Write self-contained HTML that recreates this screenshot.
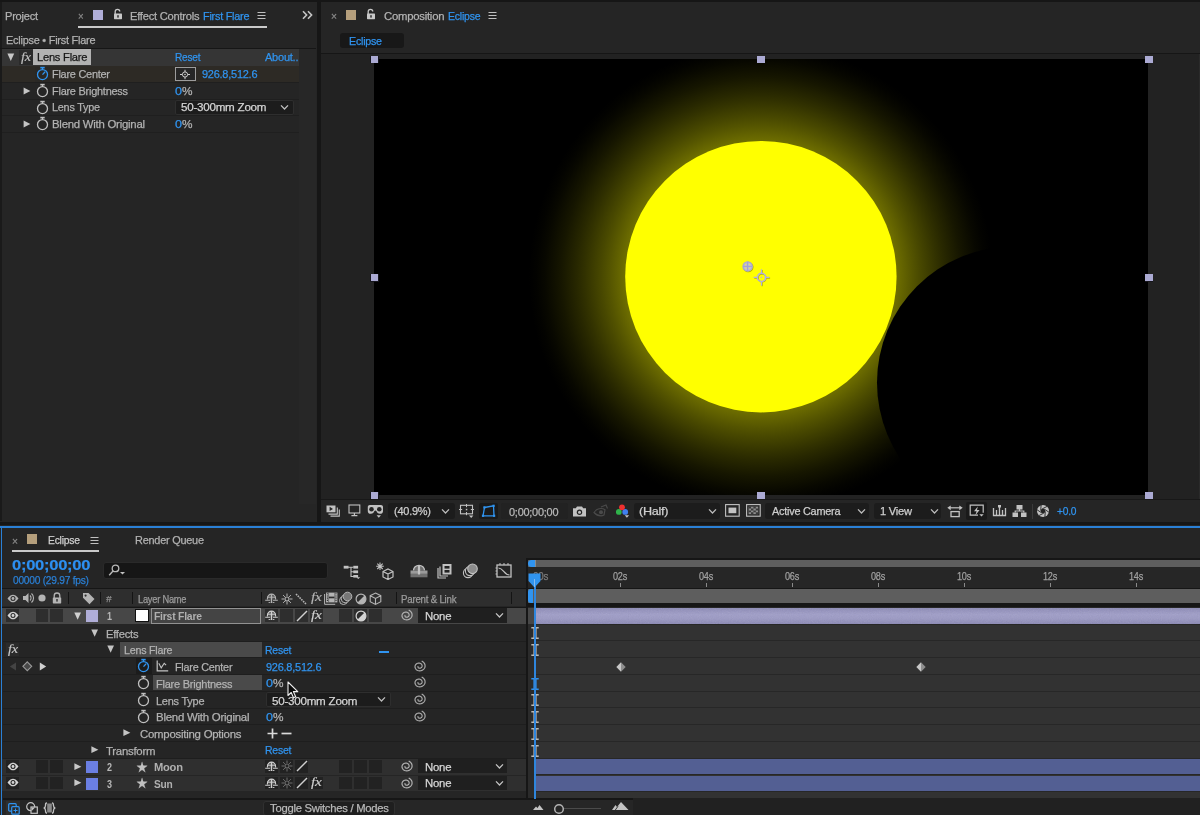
<!DOCTYPE html>
<html lang="en"><head><meta charset="utf-8"><title>Eclipse - After Effects</title>
<style>
html,body{margin:0;padding:0;background:#161616;}
body{width:1200px;height:815px;position:relative;overflow:hidden;font-family:"Liberation Sans",sans-serif;font-size:12px;color:#b9b9b9;}
#app{position:absolute;left:0;top:0;width:1200px;height:815px;overflow:hidden;}
#app div,#app span,#app svg{position:absolute;display:block;box-sizing:border-box;}
#app span{white-space:pre;transform-origin:0 50%;-webkit-text-stroke:0.25px;}
</style></head><body><div id="app">
<div style="left:0px;top:2px;width:317px;height:519.7px;background:#252525;"></div>
<div style="left:0px;top:2px;width:1.5px;height:519px;background:#1a1a1a;"></div>
<div style="left:321px;top:2px;width:879px;height:519.7px;background:#252525;"></div>
<div style="left:0px;top:525px;width:1200px;height:290px;background:#252525;"></div>
<div style="left:0px;top:525.8px;width:1200px;height:2px;background:#2a80d6;"></div>
<div style="left:0.8px;top:525.8px;width:1.3px;height:290px;background:#2a80d6;"></div>
<span style="left:5px;top:5.5px;height:20px;line-height:20px;font-size:11.6px;color:#b2b2b2;letter-spacing:-0.25px;transform:scaleX(0.9539);">Project</span>
<span style="left:78.3px;top:6px;height:20px;line-height:20px;font-size:11px;color:#8a8a8a;letter-spacing:-0.25px;transform:scaleX(0.8854);">×</span>
<div style="left:92.5px;top:10px;width:10.5px;height:9.5px;background:#b0aed8;"></div>
<svg style="left:113px;top:8px;" width="10" height="12" viewBox="0 0 10 12"><path d="M2.2 6V3.6a2.3 2.3 0 0 1 4.6 0" fill="none" stroke="#c8c8c8" stroke-width="1.3"/><rect x="1" y="5.6" width="8" height="5.6" rx="0.6" fill="#c8c8c8"/><rect x="4.3" y="7.2" width="1.4" height="2.4" fill="#232323"/></svg>
<span style="left:130px;top:5.5px;height:20px;line-height:20px;font-size:11.6px;color:#b2b2b2;letter-spacing:-0.25px;transform:scaleX(0.9609);">Effect Controls</span>
<span style="left:202.5px;top:5.5px;height:20px;line-height:20px;font-size:11.6px;color:#3094f0;letter-spacing:-0.25px;transform:scaleX(0.9361);">First Flare</span>
<svg style="left:257px;top:11px;" width="9" height="9" viewBox="0 0 9 9"><path d="M0.5 1.5h8M0.5 4.5h8M0.5 7.5h8" stroke="#c0c0c0" stroke-width="1.1"/></svg>
<div style="left:78px;top:25.8px;width:188.5px;height:1.8px;background:#cacaca;"></div>
<svg style="left:302px;top:10px;" width="11" height="10" viewBox="0 0 11 10"><path d="M1 1.2l3.6 3.8L1 8.8M6 1.2l3.6 3.8L6 8.8" fill="none" stroke="#c6c6c6" stroke-width="1.6"/></svg>
<span style="left:6px;top:29.5px;height:20px;line-height:20px;font-size:11.6px;color:#b2b2b2;letter-spacing:-0.25px;transform:scaleX(0.9415);">Eclipse • First Flare</span>
<div style="left:0px;top:47.7px;width:316px;height:1.3px;background:#161616;"></div>
<div style="left:299px;top:49px;width:17.4px;height:455px;background:#272727;"></div>
<div style="left:2px;top:49px;width:297px;height:16.7px;background:#353535;"></div>
<div style="left:2px;top:66px;width:297px;height:16.3px;background:#2d2a25;"></div>
<div style="left:2px;top:98.5px;width:297px;height:1px;background:#1f1f1f;"></div>
<div style="left:2px;top:115.2px;width:297px;height:1px;background:#1f1f1f;"></div>
<div style="left:2px;top:131.8px;width:297px;height:1px;background:#1f1f1f;"></div>
<div style="left:2px;top:82.3px;width:297px;height:1px;background:#1f1f1f;"></div>
<svg style="left:6.5px;top:53px;" width="8" height="9" viewBox="0 0 8 9"><path d="M0.400 0.500h6.800L3.800 8.100z" fill="#c8c8c8"/></svg>
<div style="left:19px;top:49.5px;width:13.5px;height:15.5px;background:#2a2a2a;"></div>
<span style="left:20.5px;top:46.8px;height:20px;line-height:20px;font-size:13.5px;color:#c0c0c0;letter-spacing:-0.25px;transform:scaleX(1.0526);font-style:italic;font-family:'Liberation Serif',serif;-webkit-text-stroke:0.150px;">fx</span>
<div style="left:33px;top:49.3px;width:58px;height:16px;background:#b2b2b2;"></div>
<span style="left:37px;top:47.3px;height:20px;line-height:20px;font-size:11.6px;color:#161616;letter-spacing:-0.25px;transform:scaleX(0.9613);">Lens Flare</span>
<span style="left:175px;top:47.3px;height:20px;line-height:20px;font-size:11.6px;color:#3094f0;letter-spacing:-0.25px;transform:scaleX(0.8704);">Reset</span>
<span style="left:265px;top:47.3px;height:20px;line-height:20px;font-size:11.6px;color:#3094f0;letter-spacing:-0.25px;transform:scaleX(0.9504);">About..</span>
<div style="left:34.5px;top:66.5px;width:15px;height:15.5px;background:#2a2825;"></div>
<svg style="left:35.5px;top:66.3px;" width="13" height="15" viewBox="0 0 13 15"><circle cx="6.5" cy="8.6" r="5" fill="none" stroke="#3094f0" stroke-width="1.3"/><path d="M4.3 1.6h4.4" stroke="#3094f0" stroke-width="1.6"/><path d="M6.5 2v2" stroke="#3094f0" stroke-width="1.3"/></svg>
<svg style="left:35.5px;top:66.3px;" width="13" height="15" viewBox="0 0 13 15"><path d="M6.5 8.6l2.6-2.8" stroke="#3094f0" stroke-width="1.3"/></svg>
<span style="left:51.5px;top:64px;height:20px;line-height:20px;font-size:11.6px;color:#b2b2b2;letter-spacing:-0.25px;transform:scaleX(0.9402);">Flare Center</span>
<div style="left:174.5px;top:67px;width:21.7px;height:14.2px;background:#262626;border:1.200px solid #9c9c9c;"></div>
<svg style="left:179px;top:68.5px;" width="12" height="11" viewBox="0 0 12 11"><circle cx="6" cy="5.5" r="2.6" fill="none" stroke="#cfcfcf" stroke-width="1"/><path d="M6 0.8v2.2M6 8v2.2M1 5.5h2.3M8.7 5.5h2.3" stroke="#cfcfcf" stroke-width="1"/><circle cx="6" cy="5.5" r="0.8" fill="#cfcfcf"/></svg>
<span style="left:202px;top:64px;height:20px;line-height:20px;font-size:11.6px;color:#3094f0;letter-spacing:-0.25px;transform:scaleX(0.9447);">926.8,512.6</span>
<svg style="left:23px;top:86.5px;" width="8" height="8" viewBox="0 0 8 8"><path d="M0.6 0.4L7.4 4 0.6 7.6z" fill="#c4c4c4"/></svg>
<svg style="left:35.5px;top:83px;" width="13" height="15" viewBox="0 0 13 15"><circle cx="6.5" cy="8.6" r="5" fill="none" stroke="#c0c0c0" stroke-width="1.3"/><path d="M4.3 1.6h4.4" stroke="#c0c0c0" stroke-width="1.6"/><path d="M6.5 2v2" stroke="#c0c0c0" stroke-width="1.3"/></svg>
<span style="left:51.5px;top:80.7px;height:20px;line-height:20px;font-size:11.6px;color:#b2b2b2;letter-spacing:-0.25px;transform:scaleX(0.9421);">Flare Brightness</span>
<span style="left:175px;top:80.7px;height:20px;line-height:20px;font-size:11.6px;color:#3094f0;letter-spacing:-0.25px;transform:scaleX(1.0847);">0</span>
<span style="left:181.5px;top:80.7px;height:20px;line-height:20px;font-size:11.6px;color:#b2b2b2;letter-spacing:-0.25px;transform:scaleX(1.0182);">%</span>
<svg style="left:35.5px;top:99.7px;" width="13" height="15" viewBox="0 0 13 15"><circle cx="6.5" cy="8.6" r="5" fill="none" stroke="#c0c0c0" stroke-width="1.3"/><path d="M4.3 1.6h4.4" stroke="#c0c0c0" stroke-width="1.6"/><path d="M6.5 2v2" stroke="#c0c0c0" stroke-width="1.3"/></svg>
<span style="left:51.5px;top:97.3px;height:20px;line-height:20px;font-size:11.6px;color:#b2b2b2;letter-spacing:-0.25px;transform:scaleX(0.9357);">Lens Type</span>
<div style="left:175px;top:100px;width:118.5px;height:14.5px;background:#1c1c1c;border:1px solid #2e2e2e;border-radius:2px;"></div>
<span style="left:181px;top:97.3px;height:20px;line-height:20px;font-size:11.6px;color:#d4d4d4;letter-spacing:-0.25px;transform:scaleX(1.0026);">50-300mm Zoom</span>
<svg style="left:280px;top:104px;" width="9" height="7" viewBox="0 0 9 7"><path d="M1 1.4l3.5 3.6L8 1.4" fill="none" stroke="#c0c0c0" stroke-width="1.3"/></svg>
<svg style="left:23px;top:120px;" width="8" height="8" viewBox="0 0 8 8"><path d="M0.6 0.4L7.4 4 0.6 7.6z" fill="#c4c4c4"/></svg>
<svg style="left:35.5px;top:116.4px;" width="13" height="15" viewBox="0 0 13 15"><circle cx="6.5" cy="8.6" r="5" fill="none" stroke="#c0c0c0" stroke-width="1.3"/><path d="M4.3 1.6h4.4" stroke="#c0c0c0" stroke-width="1.6"/><path d="M6.5 2v2" stroke="#c0c0c0" stroke-width="1.3"/></svg>
<span style="left:51.5px;top:114px;height:20px;line-height:20px;font-size:11.6px;color:#b2b2b2;letter-spacing:-0.25px;transform:scaleX(0.9817);">Blend With Original</span>
<span style="left:175px;top:114px;height:20px;line-height:20px;font-size:11.6px;color:#3094f0;letter-spacing:-0.25px;transform:scaleX(1.0847);">0</span>
<span style="left:181.5px;top:114px;height:20px;line-height:20px;font-size:11.6px;color:#b2b2b2;letter-spacing:-0.25px;transform:scaleX(1.0182);">%</span>
<span style="left:330.5px;top:6px;height:20px;line-height:20px;font-size:11px;color:#8a8a8a;letter-spacing:-0.25px;transform:scaleX(0.9320);">×</span>
<div style="left:346px;top:10px;width:10px;height:9.5px;background:#b59f7c;"></div>
<svg style="left:365.5px;top:8px;" width="10" height="12" viewBox="0 0 10 12"><path d="M2.2 6V3.6a2.3 2.3 0 0 1 4.6 0" fill="none" stroke="#c8c8c8" stroke-width="1.3"/><rect x="1" y="5.6" width="8" height="5.6" rx="0.6" fill="#c8c8c8"/><rect x="4.3" y="7.2" width="1.4" height="2.4" fill="#232323"/></svg>
<span style="left:383.5px;top:5.5px;height:20px;line-height:20px;font-size:11.6px;color:#b2b2b2;letter-spacing:-0.25px;transform:scaleX(0.9765);">Composition</span>
<span style="left:448px;top:5.5px;height:20px;line-height:20px;font-size:11.6px;color:#3094f0;letter-spacing:-0.25px;transform:scaleX(0.9059);">Eclipse</span>
<svg style="left:488px;top:11px;" width="9" height="9" viewBox="0 0 9 9"><path d="M0.5 1.5h8M0.5 4.5h8M0.5 7.5h8" stroke="#c0c0c0" stroke-width="1.1"/></svg>
<div style="left:340px;top:33px;width:63.5px;height:15px;background:#181818;border-radius:3px;"></div>
<span style="left:349px;top:30.5px;height:20px;line-height:20px;font-size:11.6px;color:#3094f0;letter-spacing:-0.25px;transform:scaleX(0.9199);">Eclipse</span>
<div style="left:321px;top:52.5px;width:879px;height:1.5px;background:#161616;"></div>
<div style="left:321px;top:54px;width:879px;height:445.5px;background:#222222;"></div>
<div style="left:1198.7px;top:54px;width:1.3px;height:445.5px;background:#2a2a2a;"></div>
<div style="left:321px;top:498.9px;width:879px;height:1.4px;background:#181818;"></div>
<svg style="left:374.200px;top:59.100px" width="773.700" height="435.500" viewBox="0 0 773.700 435.500">
<defs><radialGradient id="glow" cx="386.900" cy="217.700" r="232" gradientUnits="userSpaceOnUse"><stop offset="0" stop-color="#ffff00"/><stop offset="0.5849" stop-color="#6e6e00"/><stop offset="0.6195" stop-color="#616100"/><stop offset="0.6541" stop-color="#545400"/><stop offset="0.6887" stop-color="#484800"/><stop offset="0.7233" stop-color="#3d3d00"/><stop offset="0.7579" stop-color="#323200"/><stop offset="0.7925" stop-color="#282800"/><stop offset="0.8270" stop-color="#1f1f00"/><stop offset="0.8616" stop-color="#161600"/><stop offset="0.8962" stop-color="#0f0f00"/><stop offset="0.9308" stop-color="#080800"/><stop offset="0.9654" stop-color="#030300"/><stop offset="1.0000" stop-color="#000000"/></radialGradient></defs>
<rect width="774" height="436" fill="#000"/>
<circle cx="386.900" cy="217.700" r="232" fill="url(#glow)"/>
<circle cx="386.900" cy="217.700" r="135.700" fill="#ffff00"/>
<circle cx="638.900" cy="323.500" r="135.900" fill="#000"/>
</svg>
<svg style="left:741px;top:260px;" width="14" height="14" viewBox="0 0 14 14"><g transform="translate(0.700,0.700)" opacity="0.550"><circle cx="6.600" cy="6.400" r="4.700" fill="none" stroke="#707000" stroke-width="1.100"/></g><circle cx="6.600" cy="6.400" r="4.700" fill="#bab8e2" fill-opacity="0.900" stroke="#aaa8d6" stroke-width="1.100"/><path d="M2 6.400h9.200M6.600 1.800v9.200" stroke="#a3a1d2" stroke-width="1"/><path d="M4.700 4.500h0.010M8.500 4.500h0.010M4.700 8.300h0.010M8.500 8.300h0.010" stroke="#e6e66a" stroke-width="1.300" stroke-linecap="round"/></svg>
<svg style="left:752px;top:268px;" width="20" height="20" viewBox="0 0 20 20"><g transform="translate(0.700,0.700)" opacity="0.500"><circle cx="9.500" cy="9.400" r="3.900" fill="none" stroke="#707000" stroke-width="1.200"/><path d="M9.500 1.300v4M9.500 13.500v4M1.600 9.400h4M13.400 9.400h4" stroke="#707000" stroke-width="1.200"/></g><circle cx="9.500" cy="9.400" r="4.100" fill="none" stroke="#b3b0dc" stroke-width="1.600"/><path d="M9.500 1.300v4.200M9.500 13.300v4.200M1.600 9.400h4.200M13.200 9.400h4.200" stroke="#b3b0dc" stroke-width="1.200"/><circle cx="9.500" cy="9.400" r="0.700" fill="#b3b0dc"/></svg>
<div style="left:370.3px;top:55.7px;width:8.4px;height:7.6px;background:#15151c;"></div>
<div style="left:370.6px;top:56.0px;width:7.8px;height:7px;background:#abaad3;"></div>
<div style="left:756.8px;top:55.7px;width:8.4px;height:7.6px;background:#15151c;"></div>
<div style="left:757.1px;top:56.0px;width:7.8px;height:7px;background:#abaad3;"></div>
<div style="left:1144.8px;top:55.7px;width:8.4px;height:7.6px;background:#15151c;"></div>
<div style="left:1145.1px;top:56.0px;width:7.8px;height:7px;background:#abaad3;"></div>
<div style="left:370.3px;top:274.0px;width:8.4px;height:7.6px;background:#15151c;"></div>
<div style="left:370.6px;top:274.3px;width:7.8px;height:7px;background:#abaad3;"></div>
<div style="left:1144.8px;top:274.0px;width:8.4px;height:7.6px;background:#15151c;"></div>
<div style="left:1145.1px;top:274.3px;width:7.8px;height:7px;background:#abaad3;"></div>
<div style="left:370.3px;top:491.5px;width:8.4px;height:7.6px;background:#15151c;"></div>
<div style="left:370.6px;top:491.8px;width:7.8px;height:7px;background:#abaad3;"></div>
<div style="left:756.8px;top:491.5px;width:8.4px;height:7.6px;background:#15151c;"></div>
<div style="left:757.1px;top:491.8px;width:7.8px;height:7px;background:#abaad3;"></div>
<div style="left:1144.8px;top:491.5px;width:8.4px;height:7.6px;background:#15151c;"></div>
<div style="left:1145.1px;top:491.8px;width:7.8px;height:7px;background:#abaad3;"></div>
<svg style="left:325.5px;top:504.5px;" width="15" height="12" viewBox="0 0 15 12"><rect x="0.500" y="0.500" width="9" height="6.800" fill="#c2c2c2"/><path d="M3.600 1.800v4.200l3.400-2.100z" fill="#252525"/><path d="M11.300 2.600v6.500H2.500M13.300 4.600v6.500H4.500" fill="none" stroke="#c2c2c2" stroke-width="1.100"/></svg>
<svg style="left:347.8px;top:504px;" width="13" height="13" viewBox="0 0 13 13"><rect x="1" y="1" width="10.800" height="8" fill="none" stroke="#c2c2c2" stroke-width="1.100"/><path d="M6.400 9v2.200M3.400 11.600h6" stroke="#c2c2c2" stroke-width="1.200"/></svg>
<svg style="left:367.3px;top:504.3px;" width="17" height="15" viewBox="0 0 17 15"><path d="M0.800 2.800c0-1.100.9-1.900 2-1.900h11.200c1.100 0 2 .8 2 1.900v4.400c0 1.600-1.200 2.600-3 2.600-2.200 0-2.800-1.300-3.500-2.500-.3-.5-.6-.7-1.100-.7s-.8.200-1.100.7C6.600 8.500 6 9.800 3.800 9.800 2 9.800.8 8.800.8 7.200z" fill="#c2c2c2"/><ellipse cx="4.500" cy="5.200" rx="2.300" ry="2.300" fill="#252525"/><ellipse cx="12.300" cy="5.200" rx="2.300" ry="2.300" fill="#252525"/><path d="M9.600 11.300h4.400l-2.200 2.500z" fill="#c2c2c2"/></svg>
<div style="left:387.5px;top:502.5px;width:67px;height:16.5px;background:#1c1c1c;border-radius:3px;"></div>
<span style="left:394px;top:501.3px;height:20px;line-height:20px;font-size:11.6px;color:#cfcfcf;letter-spacing:-0.25px;transform:scaleX(0.9461);">(40.9%)</span>
<svg style="left:441px;top:508px;" width="9" height="7" viewBox="0 0 9 7"><path d="M1 1.4l3.5 3.6L8 1.4" fill="none" stroke="#bdbdbd" stroke-width="1.3"/></svg>
<svg style="left:458.5px;top:504px;" width="16" height="15" viewBox="0 0 16 15"><rect x="1.500" y="1.300" width="12" height="8.500" fill="none" stroke="#c2c2c2" stroke-width="1.100"/><path d="M7.500 0v3.200M7.500 8v3.200M0 5.500h3.200M11.800 5.500h3.200" stroke="#c2c2c2" stroke-width="1"/><rect x="6.800" y="4.800" width="1.500" height="1.500" fill="#c2c2c2"/><path d="M10 11.500h4.400l-2.200 2.500z" fill="#c2c2c2"/></svg>
<div style="left:478.5px;top:502.5px;width:19.5px;height:16.5px;background:#1a1a1a;border-radius:2px;"></div>
<svg style="left:481px;top:504px;" width="15" height="14" viewBox="0 0 15 14"><path d="M3.500 3.500L12.500 1.800 13 11.800 2 11.800z" fill="none" stroke="#3094f0" stroke-width="1.300"/><rect x="2.300" y="2.300" width="2.200" height="2.200" fill="#3094f0"/><rect x="11.500" y="0.700" width="2.200" height="2.200" fill="#3094f0"/><rect x="12" y="10.700" width="2.200" height="2.200" fill="#3094f0"/><rect x="0.900" y="10.700" width="2.200" height="2.200" fill="#3094f0"/></svg>
<div style="left:500.5px;top:502.5px;width:67.5px;height:16.5px;background:#222222;border-radius:2px;"></div>
<span style="left:508.5px;top:501.5px;height:20px;line-height:20px;font-size:11.5px;color:#b8b8b8;letter-spacing:-0.25px;transform:scaleX(0.9499);">0;00;00;00</span>
<svg style="left:571.5px;top:504.5px;" width="15" height="13" viewBox="0 0 15 13"><path d="M1 3.200h2.800l1.200-1.700h5l1.200 1.700H14v8.300H1z" fill="#c2c2c2"/><circle cx="7.500" cy="7.200" r="2.700" fill="#232323"/><circle cx="7.500" cy="7.200" r="1.500" fill="#c2c2c2"/></svg>
<svg style="left:593px;top:503.5px;" width="16" height="15" viewBox="0 0 16 15"><path d="M1 8.500c2-3 4.500-4 7-4 1.500 0 3 .5 4 1.200l-1 5.300c-1 .5-2 .8-3 .8-2.500 0-5-1-7-3.300z" fill="none" stroke="#4a4a4a" stroke-width="1.200"/><circle cx="8" cy="8.300" r="2" fill="#4a4a4a"/><path d="M8 3l5-2 1.500 3.500" fill="none" stroke="#4a4a4a" stroke-width="1.200"/></svg>
<svg style="left:615.5px;top:503.5px;" width="14" height="15" viewBox="0 0 14 15"><circle cx="2.800" cy="7.900" r="2.900" fill="#2fb34a"/><circle cx="9.200" cy="7.900" r="2.900" fill="#3f7fee"/><circle cx="6" cy="3.300" r="2.900" fill="#ee3030"/><path d="M8.700 11.300h4.400l-2.200 2.500z" fill="#c2c2c2"/></svg>
<div style="left:633.5px;top:502.5px;width:86.5px;height:16.5px;background:#1c1c1c;border-radius:3px;"></div>
<span style="left:639px;top:501.3px;height:20px;line-height:20px;font-size:11.6px;color:#cfcfcf;letter-spacing:-0.25px;transform:scaleX(1.0888);">(Half)</span>
<svg style="left:707.5px;top:508px;" width="9" height="7" viewBox="0 0 9 7"><path d="M1 1.4l3.5 3.6L8 1.4" fill="none" stroke="#bdbdbd" stroke-width="1.3"/></svg>
<svg style="left:724.5px;top:504px;" width="15" height="13" viewBox="0 0 15 13"><rect x="0.600" y="0.600" width="13.600" height="11.600" fill="none" stroke="#c2c2c2" stroke-width="1.100"/><rect x="3.500" y="3.600" width="7.800" height="5.600" fill="#c2c2c2"/></svg>
<svg style="left:746px;top:504px;" width="15" height="13" viewBox="0 0 15 13"><rect x="0.600" y="0.600" width="13.600" height="11.600" fill="none" stroke="#c2c2c2" stroke-width="1.100"/><rect x="2.600" y="2.600" width="9.600" height="7.600" fill="#8e8e8e"/><path d="M2.600 2.600h2.400v1.900H2.600zM7.400 2.600h2.400v1.900H7.400zM5 4.500h2.400v1.900H5zM9.800 4.500h2.400v1.900H9.800zM2.600 6.400h2.400v1.900H2.600zM7.400 6.400h2.400v1.900H7.400zM5 8.300h2.400v1.900H5zM9.800 8.300h2.400v1.900H9.800z" fill="#3a3a3a"/></svg>
<div style="left:765px;top:502.5px;width:104px;height:16.5px;background:#1c1c1c;border-radius:3px;"></div>
<span style="left:771.5px;top:501.3px;height:20px;line-height:20px;font-size:11.6px;color:#cfcfcf;letter-spacing:-0.25px;transform:scaleX(0.9380);">Active Camera</span>
<svg style="left:857px;top:508px;" width="9" height="7" viewBox="0 0 9 7"><path d="M1 1.4l3.5 3.6L8 1.4" fill="none" stroke="#bdbdbd" stroke-width="1.3"/></svg>
<div style="left:873.5px;top:502.5px;width:67.5px;height:16.5px;background:#1c1c1c;border-radius:3px;"></div>
<span style="left:880px;top:501.3px;height:20px;line-height:20px;font-size:11.6px;color:#cfcfcf;letter-spacing:-0.25px;transform:scaleX(0.9597);">1 View</span>
<svg style="left:930px;top:508px;" width="9" height="7" viewBox="0 0 9 7"><path d="M1 1.4l3.5 3.6L8 1.4" fill="none" stroke="#bdbdbd" stroke-width="1.3"/></svg>
<svg style="left:946.5px;top:503.5px;" width="16" height="14" viewBox="0 0 16 14"><path d="M2.500 3.800h11" stroke="#c2c2c2" stroke-width="1.200"/><path d="M0.300 3.800l3.400-2.400v4.800zM15.700 3.800l-3.400-2.400v4.800z" fill="#c2c2c2"/><rect x="4" y="7.600" width="8.200" height="5" fill="none" stroke="#c2c2c2" stroke-width="1.300"/></svg>
<div style="left:965.5px;top:502px;width:21.5px;height:17.5px;background:#1a1a1a;border-radius:2px;"></div>
<svg style="left:968.5px;top:504px;" width="16" height="14" viewBox="0 0 16 14"><path d="M9 11.200H1.200V1.200h13v7.500" fill="none" stroke="#c2c2c2" stroke-width="1.200"/><path d="M8.800 2.500L5 7.300h2.600L6.200 11.500 10.600 6H8z" fill="#c2c2c2"/><path d="M10.300 10.200h4.400l-2.200 2.400z" fill="#c2c2c2"/></svg>
<svg style="left:991.5px;top:504px;" width="15" height="14" viewBox="0 0 15 14"><path d="M1.500 4v7.500h12V4" fill="none" stroke="#c2c2c2" stroke-width="1.300"/><path d="M4.500 6v5M7.500 2v9.500M10.500 6v5" stroke="#c2c2c2" stroke-width="1.300"/><rect x="6" y="1" width="3" height="2.500" fill="#c2c2c2"/></svg>
<svg style="left:1012px;top:504px;" width="15" height="14" viewBox="0 0 15 14"><rect x="4.500" y="1" width="6" height="4.500" fill="#c2c2c2"/><rect x="0.500" y="8.500" width="5.500" height="4.500" fill="#c2c2c2"/><rect x="9" y="8.500" width="5.500" height="4.500" fill="#c2c2c2"/><path d="M7.500 5v2M3.200 8.500V7h8.600v1.500" fill="none" stroke="#c2c2c2" stroke-width="1.200"/></svg>
<div style="left:1031.5px;top:503.5px;width:1px;height:15px;background:#3a3a3a;"></div>
<svg style="left:1036.3px;top:504.2px;" width="14" height="14" viewBox="0 0 14 14"><circle cx="7" cy="7" r="6" fill="#c2c2c2"/><circle cx="7" cy="7" r="2.300" fill="#252525"/><path d="M9.27 7.40L8.92 12.90M7.79 9.16L2.85 11.61M5.52 8.76L0.94 5.71M4.73 6.60L5.08 1.10M6.21 4.84L11.15 2.39M8.48 5.24L13.06 8.29" stroke="#252525" stroke-width="0.900"/></svg>
<span style="left:1056.5px;top:501.3px;height:20px;line-height:20px;font-size:11.6px;color:#3094f0;letter-spacing:-0.25px;transform:scaleX(0.8807);">+0.0</span>
<span style="left:11.5px;top:530.5px;height:20px;line-height:20px;font-size:11px;color:#8a8a8a;letter-spacing:-0.25px;transform:scaleX(0.9320);">×</span>
<div style="left:26.7px;top:534px;width:10px;height:10px;background:#b59f7c;"></div>
<span style="left:48px;top:530.4px;height:20px;line-height:20px;font-size:11.6px;color:#d0d0d0;letter-spacing:-0.25px;transform:scaleX(0.8920);">Eclipse</span>
<svg style="left:90px;top:536px;" width="9" height="9" viewBox="0 0 9 9"><path d="M0.5 1.5h8M0.5 4.5h8M0.5 7.5h8" stroke="#c0c0c0" stroke-width="1.1"/></svg>
<div style="left:12px;top:550.2px;width:87px;height:1.8px;background:#cacaca;"></div>
<span style="left:135px;top:530.4px;height:20px;line-height:20px;font-size:11.6px;color:#b2b2b2;letter-spacing:-0.25px;transform:scaleX(0.9412);">Render Queue</span>
<span style="left:12px;top:555.2px;height:20px;line-height:20px;font-size:15px;color:#2d8ff0;letter-spacing:-0.25px;transform:scaleX(1.1034);font-weight:700;-webkit-text-stroke:0.200px;">0;00;00;00</span>
<span style="left:13px;top:570.3px;height:20px;line-height:20px;font-size:10.5px;color:#2a7fd4;letter-spacing:-0.25px;transform:scaleX(0.9705);">00000 (29.97 fps)</span>
<div style="left:102.5px;top:561.8px;width:225px;height:17.6px;background:#161616;border-radius:3px;border:1px solid #2a2a2a;"></div>
<svg style="left:108px;top:564px;" width="18" height="13" viewBox="0 0 18 13"><circle cx="7.500" cy="4.400" r="3.300" fill="none" stroke="#b8b8b8" stroke-width="1.300"/><path d="M5.300 6.800L1.200 11.200" stroke="#b8b8b8" stroke-width="1.400"/><path d="M12 8h5l-2.500 2.600z" fill="#c0c0c0"/></svg>
<svg style="left:342px;top:564px;" width="19" height="15" viewBox="0 0 19 15"><path d="M4 3.200h7.500M9 3.200v9.300h3M9 7.800h3" fill="none" stroke="#c2c2c2" stroke-width="1.100"/><rect x="1.700" y="1.800" width="4.800" height="2.800" fill="#c2c2c2"/><rect x="11.300" y="1.800" width="4.800" height="2.800" fill="#c2c2c2"/><rect x="11.300" y="6.400" width="4.800" height="2.800" fill="#c2c2c2"/><rect x="11.300" y="11" width="4.800" height="2.600" fill="#c2c2c2"/><path d="M14.300 13.200h4l-2 1.800z" fill="#c2c2c2"/></svg>
<svg style="left:374.5px;top:561.5px;" width="19" height="18" viewBox="0 0 19 18"><path d="M5 0.500v7.500M1.200 4.300h7.600M2.300 1.600l5.400 5.400M7.700 1.600L2.300 7" stroke="#c2c2c2" stroke-width="1.100"/><path d="M8 9.500l5-2.500 5 2.500v5.500l-5 2.500-5-2.500zM8 9.500l5 2.500 5-2.500M13 12v5.500" fill="none" stroke="#c2c2c2" stroke-width="1.200"/></svg>
<svg style="left:409.5px;top:562.5px;" width="18" height="15" viewBox="0 0 18 15"><path d="M3.500 7.500a5.500 5.200 0 0 1 11 0" fill="#6e6e6e" stroke="#c2c2c2" stroke-width="1.300"/><rect x="7.900" y="3" width="2.200" height="8" fill="#c2c2c2"/><rect x="0.500" y="7.500" width="17" height="3.400" fill="#9a9a9a"/><rect x="0.500" y="10.900" width="17" height="3.400" fill="#707070"/><rect x="7.900" y="6" width="2.200" height="5.500" fill="#c2c2c2"/></svg>
<svg style="left:437px;top:562.5px;" width="15" height="16" viewBox="0 0 15 16"><path d="M1 5v10h8" fill="none" stroke="#c2c2c2" stroke-width="1.200"/><path d="M3 3.500v9.500h8" fill="none" stroke="#c2c2c2" stroke-width="1.200"/><rect x="5.500" y="1" width="9" height="10.500" fill="#c2c2c2"/><rect x="7.500" y="3" width="5" height="2.600" fill="#232323"/><rect x="7.500" y="7" width="5" height="2.600" fill="#232323"/></svg>
<svg style="left:461.5px;top:562.5px;" width="17" height="16" viewBox="0 0 17 16"><circle cx="6" cy="10" r="4.600" fill="none" stroke="#c2c2c2" stroke-width="1.100"/><circle cx="8" cy="8" r="4.600" fill="#232323" stroke="#c2c2c2" stroke-width="1.100"/><circle cx="10.500" cy="5.800" r="4.800" fill="#8c8c8c" stroke="#c2c2c2" stroke-width="1.100"/></svg>
<svg style="left:494.5px;top:562px;" width="18" height="17" viewBox="0 0 18 17"><rect x="2" y="3" width="14" height="12" fill="none" stroke="#c2c2c2" stroke-width="1.300"/><path d="M3.500 6c5 0 5.500 7 11 7" fill="none" stroke="#c2c2c2" stroke-width="1.200"/><path d="M5 1v2M9 1v2M13 1v2M0.500 6h1.500M0.500 9h1.500M0.500 12h1.500" stroke="#c2c2c2" stroke-width="1"/></svg>
<div style="left:2px;top:588px;width:524.5px;height:1.2px;background:#161616;"></div>
<div style="left:2px;top:589.2px;width:524.5px;height:17.3px;background:#2e2e2e;"></div>
<div style="left:2px;top:606.5px;width:524.5px;height:1.6px;background:#161616;"></div>
<div style="left:68px;top:592px;width:1px;height:12px;background:#141414;"></div>
<div style="left:100px;top:592px;width:1px;height:12px;background:#141414;"></div>
<div style="left:132px;top:592px;width:1px;height:12px;background:#141414;"></div>
<div style="left:260.5px;top:592px;width:1px;height:12px;background:#141414;"></div>
<div style="left:395.5px;top:592px;width:1px;height:12px;background:#141414;"></div>
<div style="left:511px;top:592px;width:1px;height:12px;background:#141414;"></div>
<svg style="left:6.5px;top:594.3px;" width="12" height="9" viewBox="0 0 12 9"><path d="M0.500 4.500C2.500 1.500 4.500 0.700 6 0.700s3.500 0.800 5.500 3.800C9.500 7.500 7.500 8.300 6 8.300S2.500 7.500 0.500 4.500z" fill="#b4b4b4"/><circle cx="6" cy="4.500" r="2.500" fill="#2e2e2e"/><circle cx="6" cy="4.500" r="1.400" fill="#b4b4b4"/></svg>
<svg style="left:21.5px;top:592px;" width="13" height="12" viewBox="0 0 13 12"><path d="M1 4h2.500l3-3v10l-3-3H1z" fill="#b4b4b4"/><path d="M8 3.500a3.500 3.500 0 0 1 0 5M9.500 1.500a6 6 0 0 1 0 9" fill="none" stroke="#b4b4b4" stroke-width="1.100"/></svg>
<svg style="left:37.5px;top:594px;" width="8" height="8" viewBox="0 0 8 8"><circle cx="4" cy="4" r="3.600" fill="#b4b4b4"/></svg>
<svg style="left:51.5px;top:591.5px;" width="10" height="12" viewBox="0 0 10 12"><path d="M2.200 6V3.800a2.800 2.800 0 0 1 5.600 0V6" fill="none" stroke="#b4b4b4" stroke-width="1.300"/><rect x="0.800" y="5.400" width="8.400" height="6" rx="0.600" fill="#b4b4b4"/><rect x="4.300" y="7" width="1.400" height="2.600" fill="#2e2e2e"/></svg>
<svg style="left:81.5px;top:591.5px;" width="13" height="13" viewBox="0 0 13 13"><path d="M1 1h5.500l6 6-5 5.200-6.500-6.500z" fill="#b4b4b4"/><circle cx="3.600" cy="3.600" r="1.100" fill="#2e2e2e"/></svg>
<span style="left:105.5px;top:588.7px;height:20px;line-height:20px;font-size:9.5px;color:#8e8e8e;letter-spacing:-0.25px;transform:scaleX(1.0383);font-style:italic;">#</span>
<span style="left:138px;top:588.5px;height:20px;line-height:20px;font-size:10.5px;color:#9c9c9c;letter-spacing:-0.25px;transform:scaleX(0.8826);">Layer Name</span>
<span style="left:401px;top:588.5px;height:20px;line-height:20px;font-size:10.5px;color:#9c9c9c;letter-spacing:-0.25px;transform:scaleX(0.9243);">Parent &amp; Link</span>
<svg style="left:264.5px;top:593px;" width="13" height="11" viewBox="0 0 13 11"><path d="M2.400 6.600V5.400A4.100 4.300 0 0 1 10.600 5.400V6.600" fill="#b4b4b4" fill-opacity="0.220" stroke="#b4b4b4" stroke-width="1.100"/><path d="M6.500 1.200v8.800" stroke="#b4b4b4" stroke-width="1.400"/><path d="M2.400 4.200h8.200" stroke="#b4b4b4" stroke-width="1"/><path d="M0.200 7.300h5M8 7.300h4.800" stroke="#b4b4b4" stroke-width="1.100"/><path d="M3.600 9.500h1.700M7.700 9.500h1.700" stroke="#b4b4b4" stroke-width="0.900"/></svg>
<svg style="left:280.5px;top:592.5px;" width="12" height="12" viewBox="0 0 12 12"><circle cx="6" cy="6" r="2" fill="none" stroke="#b4b4b4" stroke-width="1.100"/><path d="M6 0.500v2.500M6 9v2.500M0.500 6h2.500M9 6h2.500M2.100 2.100l1.800 1.800M8.100 8.100l1.800 1.800M9.900 2.100L8.100 3.900M3.900 8.100L2.100 9.900" stroke="#b4b4b4" stroke-width="1"/></svg>
<svg style="left:295px;top:592.5px;" width="12" height="12" viewBox="0 0 12 12"><path d="M1 1l10 10" stroke="#b4b4b4" stroke-width="1.600" stroke-dasharray="1.600 0.900"/></svg>
<span style="left:310.5px;top:587.4px;height:20px;line-height:20px;font-size:13.5px;color:#b4b4b4;letter-spacing:-0.25px;transform:scaleX(1.1368);font-style:italic;font-family:'Liberation Serif',serif;-webkit-text-stroke:0.150px;">fx</span>
<svg style="left:323.5px;top:591.5px;" width="14" height="13" viewBox="0 0 14 13"><path d="M0.600 2v10.300h10.600" fill="none" stroke="#b4b4b4" stroke-width="1"/><rect x="2" y="0.600" width="11.400" height="9.800" fill="#b4b4b4"/><rect x="5" y="4.600" width="5.400" height="1.700" fill="#2e2e2e"/><path d="M3.400 1.200v8.800M12 1.200v8.800" stroke="#2e2e2e" stroke-width="1.100" stroke-dasharray="1.100 1.100"/><path d="M4.600 0.600v9.800M10.800 0.600v9.800" stroke="#2e2e2e" stroke-width="0.500"/></svg>
<svg style="left:338px;top:590.5px;" width="15" height="15" viewBox="0 0 15 15"><circle cx="5.500" cy="9.500" r="4" fill="none" stroke="#b4b4b4" stroke-width="1"/><circle cx="7.200" cy="7.800" r="4" fill="#2e2e2e" stroke="#b4b4b4" stroke-width="1"/><circle cx="9.500" cy="5.500" r="4.300" fill="#777" stroke="#b4b4b4" stroke-width="1"/></svg>
<svg style="left:355px;top:592.5px;" width="12" height="12" viewBox="0 0 12 12"><circle cx="6" cy="6" r="4.900" fill="none" stroke="#b4b4b4" stroke-width="1.200"/><path d="M9.500 2.500A4.950 4.950 0 0 1 2.500 9.500z" fill="#b4b4b4"/></svg>
<svg style="left:369px;top:591.5px;" width="13" height="14" viewBox="0 0 13 14"><path d="M6.500 1l5.300 2.700v6L6.500 12.500 1.200 9.700v-6zM1.200 3.700l5.300 2.700 5.300-2.700M6.500 6.400v6" fill="none" stroke="#b4b4b4" stroke-width="1.100"/></svg>
<div style="left:2.5px;top:640.5px;width:524px;height:1px;background:#1e1e1e;"></div>
<div style="left:2.5px;top:657.25px;width:524px;height:1px;background:#1e1e1e;"></div>
<div style="left:2.5px;top:674.0px;width:524px;height:1px;background:#1e1e1e;"></div>
<div style="left:2.5px;top:690.75px;width:524px;height:1px;background:#1e1e1e;"></div>
<div style="left:2.5px;top:707.5px;width:524px;height:1px;background:#1e1e1e;"></div>
<div style="left:2.5px;top:724.25px;width:524px;height:1px;background:#1e1e1e;"></div>
<div style="left:2.5px;top:741.0px;width:524px;height:1px;background:#1e1e1e;"></div>
<div style="left:2.5px;top:757.75px;width:524px;height:1px;background:#1e1e1e;"></div>
<div style="left:2px;top:608.2px;width:524.5px;height:15.6px;background:#474747;"></div>
<div style="left:6px;top:609.0px;width:13.2px;height:12.8px;background:#2e2e2e;"></div>
<svg style="left:6.5px;top:610.8px;" width="12" height="9" viewBox="0 0 12 9"><path d="M0.500 4.500C2.500 1.500 4.500 0.700 6 0.700s3.500 0.800 5.500 3.800C9.500 7.500 7.500 8.300 6 8.300S2.500 7.500 0.500 4.500z" fill="#d4d4d4"/><circle cx="6" cy="4.500" r="2.500" fill="#2e2e2e"/><circle cx="6" cy="4.500" r="1.400" fill="#d4d4d4"/></svg>
<div style="left:35.5px;top:609.0px;width:12.7px;height:12.8px;background:#2e2e2e;"></div>
<div style="left:50px;top:609.0px;width:12.7px;height:12.8px;background:#2e2e2e;"></div>
<svg style="left:73.5px;top:611.8px;" width="8" height="8" viewBox="0 0 8 8"><path d="M0.300 0.400h6.700L3.650 7.800z" fill="#d0d0d0"/></svg>
<div style="left:86px;top:610.0px;width:12px;height:12px;background:#b0aed8;"></div>
<span style="left:107px;top:606.1px;height:20px;line-height:20px;font-size:11.6px;color:#b8b8b8;letter-spacing:-0.25px;transform:scaleX(0.7748);font-weight:700;-webkit-text-stroke:0;">1</span>
<div style="left:135.2px;top:609.2px;width:13.6px;height:13.2px;background:#ffffff;border:1px solid #101010;"></div>
<div style="left:150.7px;top:608.0px;width:110px;height:15.6px;background:#444444;border:1.400px solid #929292;"></div>
<span style="left:154px;top:606.1px;height:20px;line-height:20px;font-size:11.6px;color:#b0b0b0;letter-spacing:-0.25px;transform:scaleX(0.8961);font-weight:700;-webkit-text-stroke:0;">First Flare</span>
<div style="left:265px;top:609.0px;width:13px;height:12.8px;background:#2e2e2e;"></div>
<div style="left:280px;top:609.0px;width:13px;height:12.8px;background:#2e2e2e;"></div>
<div style="left:295px;top:609.0px;width:13px;height:12.8px;background:#2e2e2e;"></div>
<div style="left:310px;top:609.0px;width:13px;height:12.8px;background:#2e2e2e;"></div>
<div style="left:339px;top:609.0px;width:13px;height:12.8px;background:#2e2e2e;"></div>
<div style="left:354px;top:609.0px;width:13px;height:12.8px;background:#2e2e2e;"></div>
<div style="left:369px;top:609.0px;width:13px;height:12.8px;background:#2e2e2e;"></div>
<svg style="left:264.5px;top:610.0px;" width="13" height="11" viewBox="0 0 13 11"><path d="M2.400 6.600V5.400A4.100 4.300 0 0 1 10.600 5.400V6.600" fill="#d0d0d0" fill-opacity="0.220" stroke="#d0d0d0" stroke-width="1.100"/><path d="M6.500 1.200v8.800" stroke="#d0d0d0" stroke-width="1.400"/><path d="M2.400 4.200h8.200" stroke="#d0d0d0" stroke-width="1"/><path d="M0.200 7.300h5M8 7.300h4.800" stroke="#d0d0d0" stroke-width="1.100"/><path d="M3.600 9.500h1.700M7.700 9.500h1.700" stroke="#d0d0d0" stroke-width="0.900"/></svg>
<svg style="left:295.5px;top:609.5px;" width="12" height="12" viewBox="0 0 12 12"><path d="M1 11L11 1" stroke="#d0d0d0" stroke-width="1.400"/></svg>
<span style="left:311.0px;top:604.9px;height:20px;line-height:20px;font-size:13.5px;color:#cfcfcf;letter-spacing:-0.25px;transform:scaleX(1.1368);font-style:italic;font-family:'Liberation Serif',serif;-webkit-text-stroke:0.150px;">fx</span>
<svg style="left:355px;top:609.5px;" width="12" height="12" viewBox="0 0 12 12"><circle cx="6" cy="6" r="4.900" fill="none" stroke="#d4d4d4" stroke-width="1.200"/><path d="M9.500 2.500A4.950 4.950 0 0 1 2.500 9.500z" fill="#d4d4d4"/></svg>
<svg style="left:400.2px;top:609.4000000000001px;" width="13" height="13" viewBox="0 0 13 13"><path d="M9.06 1.20L10.15 1.93L11.02 2.83L11.65 3.86L12.00 4.97L12.09 6.11L11.90 7.21L11.46 8.23L10.79 9.13L9.94 9.86L8.96 10.40L7.89 10.73L6.79 10.85L5.70 10.74L4.69 10.44L3.80 9.95L3.06 9.32L2.50 8.57L2.14 7.76L1.99 6.91L2.05 6.07L2.30 5.28L2.73 4.57L3.30 3.98L3.98 3.53L4.74 3.23L5.53 3.09L6.31 3.11L7.04 3.28L7.70 3.57L8.26 3.98L8.69 4.47L8.98 5.02L9.12 5.59L9.12 6.16L8.99 6.69L8.74 7.17L8.39 7.57L7.97 7.87L7.51 8.08L7.02 8.19L6.54 8.19L6.10 8.10L5.71 7.93L5.38 7.70L5.14 7.43L4.98 7.12L4.91 6.81L4.92 6.52" fill="none" stroke="#b4b4b4" stroke-width="1.150" stroke-linecap="round"/></svg>
<div style="left:418.2px;top:608.2px;width:89px;height:14.5px;background:#1f1f1f;"></div>
<span style="left:425px;top:605.9px;height:20px;line-height:20px;font-size:11.6px;color:#d6d6d6;letter-spacing:-0.25px;transform:scaleX(0.9826);">None</span>
<svg style="left:494.5px;top:612.2px;" width="9" height="7" viewBox="0 0 9 7"><path d="M1 1.4l3.5 3.6L8 1.4" fill="none" stroke="#c4c4c4" stroke-width="1.3"/></svg>
<div style="left:2px;top:758.95px;width:524.5px;height:15.6px;background:#2f2f2f;"></div>
<div style="left:6px;top:759.75px;width:13.2px;height:12.8px;background:#222222;"></div>
<svg style="left:6.5px;top:761.55px;" width="12" height="9" viewBox="0 0 12 9"><path d="M0.500 4.500C2.500 1.500 4.500 0.700 6 0.700s3.500 0.800 5.500 3.800C9.500 7.500 7.500 8.300 6 8.300S2.500 7.500 0.500 4.500z" fill="#d4d4d4"/><circle cx="6" cy="4.500" r="2.500" fill="#222222"/><circle cx="6" cy="4.500" r="1.400" fill="#d4d4d4"/></svg>
<div style="left:35.5px;top:759.75px;width:12.7px;height:12.8px;background:#222222;"></div>
<div style="left:50px;top:759.75px;width:12.7px;height:12.8px;background:#222222;"></div>
<svg style="left:73.5px;top:762.55px;" width="8" height="8" viewBox="0 0 8 8"><path d="M0.400 0.300L7.400 3.700 0.400 7.100z" fill="#c8c8c8"/></svg>
<div style="left:86px;top:760.75px;width:12px;height:12px;background:#6b7fe3;"></div>
<span style="left:107px;top:756.85px;height:20px;line-height:20px;font-size:11.6px;color:#b8b8b8;letter-spacing:-0.25px;transform:scaleX(0.7748);font-weight:700;-webkit-text-stroke:0;">2</span>
<span style="left:135.5px;top:756.55px;height:20px;line-height:20px;font-size:14px;color:#c0c0c0;letter-spacing:-0.25px;transform:scaleX(0.9615);">★</span>
<span style="left:154px;top:756.85px;height:20px;line-height:20px;font-size:11.6px;color:#b0b0b0;letter-spacing:-0.25px;transform:scaleX(0.9617);font-weight:700;-webkit-text-stroke:0;">Moon</span>
<div style="left:265px;top:759.75px;width:13px;height:12.8px;background:#222222;"></div>
<div style="left:280px;top:759.75px;width:13px;height:12.8px;background:#222222;"></div>
<div style="left:295px;top:759.75px;width:13px;height:12.8px;background:#222222;"></div>
<div style="left:339px;top:759.75px;width:13px;height:12.8px;background:#222222;"></div>
<div style="left:354px;top:759.75px;width:13px;height:12.8px;background:#222222;"></div>
<div style="left:369px;top:759.75px;width:13px;height:12.8px;background:#222222;"></div>
<svg style="left:264.5px;top:760.75px;" width="13" height="11" viewBox="0 0 13 11"><path d="M2.400 6.600V5.400A4.100 4.300 0 0 1 10.600 5.400V6.600" fill="#d0d0d0" fill-opacity="0.220" stroke="#d0d0d0" stroke-width="1.100"/><path d="M6.500 1.200v8.800" stroke="#d0d0d0" stroke-width="1.400"/><path d="M2.400 4.200h8.200" stroke="#d0d0d0" stroke-width="1"/><path d="M0.200 7.300h5M8 7.300h4.800" stroke="#d0d0d0" stroke-width="1.100"/><path d="M3.600 9.500h1.700M7.700 9.500h1.700" stroke="#d0d0d0" stroke-width="0.900"/></svg>
<svg style="left:280.5px;top:760.25px;" width="12" height="12" viewBox="0 0 12 12"><circle cx="6" cy="6" r="2" fill="none" stroke="#6c6c6c" stroke-width="1.100"/><path d="M6 0.500v2.500M6 9v2.500M0.500 6h2.500M9 6h2.500M2.100 2.100l1.800 1.800M8.100 8.100l1.800 1.800M9.900 2.100L8.100 3.900M3.900 8.100L2.100 9.900" stroke="#6c6c6c" stroke-width="1"/></svg>
<svg style="left:295.5px;top:760.25px;" width="12" height="12" viewBox="0 0 12 12"><path d="M1 11L11 1" stroke="#d0d0d0" stroke-width="1.400"/></svg>
<svg style="left:400.2px;top:760.1500000000001px;" width="13" height="13" viewBox="0 0 13 13"><path d="M9.06 1.20L10.15 1.93L11.02 2.83L11.65 3.86L12.00 4.97L12.09 6.11L11.90 7.21L11.46 8.23L10.79 9.13L9.94 9.86L8.96 10.40L7.89 10.73L6.79 10.85L5.70 10.74L4.69 10.44L3.80 9.95L3.06 9.32L2.50 8.57L2.14 7.76L1.99 6.91L2.05 6.07L2.30 5.28L2.73 4.57L3.30 3.98L3.98 3.53L4.74 3.23L5.53 3.09L6.31 3.11L7.04 3.28L7.70 3.57L8.26 3.98L8.69 4.47L8.98 5.02L9.12 5.59L9.12 6.16L8.99 6.69L8.74 7.17L8.39 7.57L7.97 7.87L7.51 8.08L7.02 8.19L6.54 8.19L6.10 8.10L5.71 7.93L5.38 7.70L5.14 7.43L4.98 7.12L4.91 6.81L4.92 6.52" fill="none" stroke="#b4b4b4" stroke-width="1.150" stroke-linecap="round"/></svg>
<div style="left:418.2px;top:758.95px;width:89px;height:14.5px;background:#1f1f1f;"></div>
<span style="left:425px;top:756.65px;height:20px;line-height:20px;font-size:11.6px;color:#d6d6d6;letter-spacing:-0.25px;transform:scaleX(0.9826);">None</span>
<svg style="left:494.5px;top:762.95px;" width="9" height="7" viewBox="0 0 9 7"><path d="M1 1.4l3.5 3.6L8 1.4" fill="none" stroke="#c4c4c4" stroke-width="1.3"/></svg>
<div style="left:2px;top:775.7px;width:524.5px;height:15.6px;background:#2f2f2f;"></div>
<div style="left:6px;top:776.5px;width:13.2px;height:12.8px;background:#222222;"></div>
<svg style="left:6.5px;top:778.3px;" width="12" height="9" viewBox="0 0 12 9"><path d="M0.500 4.500C2.500 1.500 4.500 0.700 6 0.700s3.500 0.800 5.500 3.800C9.500 7.500 7.500 8.300 6 8.300S2.500 7.500 0.500 4.500z" fill="#d4d4d4"/><circle cx="6" cy="4.500" r="2.500" fill="#222222"/><circle cx="6" cy="4.500" r="1.400" fill="#d4d4d4"/></svg>
<div style="left:35.5px;top:776.5px;width:12.7px;height:12.8px;background:#222222;"></div>
<div style="left:50px;top:776.5px;width:12.7px;height:12.8px;background:#222222;"></div>
<svg style="left:73.5px;top:779.3px;" width="8" height="8" viewBox="0 0 8 8"><path d="M0.400 0.300L7.400 3.700 0.400 7.100z" fill="#c8c8c8"/></svg>
<div style="left:86px;top:777.5px;width:12px;height:12px;background:#6b7fe3;"></div>
<span style="left:107px;top:773.6px;height:20px;line-height:20px;font-size:11.6px;color:#b8b8b8;letter-spacing:-0.25px;transform:scaleX(0.7748);font-weight:700;-webkit-text-stroke:0;">3</span>
<span style="left:135.5px;top:773.3px;height:20px;line-height:20px;font-size:14px;color:#c0c0c0;letter-spacing:-0.25px;transform:scaleX(0.9615);">★</span>
<span style="left:154px;top:773.6px;height:20px;line-height:20px;font-size:11.6px;color:#b0b0b0;letter-spacing:-0.25px;transform:scaleX(0.8782);font-weight:700;-webkit-text-stroke:0;">Sun</span>
<div style="left:265px;top:776.5px;width:13px;height:12.8px;background:#222222;"></div>
<div style="left:280px;top:776.5px;width:13px;height:12.8px;background:#222222;"></div>
<div style="left:295px;top:776.5px;width:13px;height:12.8px;background:#222222;"></div>
<div style="left:310px;top:776.5px;width:13px;height:12.8px;background:#222222;"></div>
<div style="left:339px;top:776.5px;width:13px;height:12.8px;background:#222222;"></div>
<div style="left:354px;top:776.5px;width:13px;height:12.8px;background:#222222;"></div>
<div style="left:369px;top:776.5px;width:13px;height:12.8px;background:#222222;"></div>
<svg style="left:264.5px;top:777.5px;" width="13" height="11" viewBox="0 0 13 11"><path d="M2.400 6.600V5.400A4.100 4.300 0 0 1 10.600 5.400V6.600" fill="#d0d0d0" fill-opacity="0.220" stroke="#d0d0d0" stroke-width="1.100"/><path d="M6.500 1.200v8.800" stroke="#d0d0d0" stroke-width="1.400"/><path d="M2.400 4.200h8.200" stroke="#d0d0d0" stroke-width="1"/><path d="M0.200 7.300h5M8 7.300h4.800" stroke="#d0d0d0" stroke-width="1.100"/><path d="M3.600 9.500h1.700M7.700 9.500h1.700" stroke="#d0d0d0" stroke-width="0.900"/></svg>
<svg style="left:280.5px;top:777.0px;" width="12" height="12" viewBox="0 0 12 12"><circle cx="6" cy="6" r="2" fill="none" stroke="#6c6c6c" stroke-width="1.100"/><path d="M6 0.500v2.500M6 9v2.500M0.500 6h2.500M9 6h2.500M2.100 2.100l1.800 1.800M8.100 8.100l1.800 1.800M9.900 2.100L8.100 3.900M3.900 8.100L2.100 9.900" stroke="#6c6c6c" stroke-width="1"/></svg>
<svg style="left:295.5px;top:777.0px;" width="12" height="12" viewBox="0 0 12 12"><path d="M1 11L11 1" stroke="#d0d0d0" stroke-width="1.400"/></svg>
<span style="left:311.0px;top:772.4px;height:20px;line-height:20px;font-size:13.5px;color:#cfcfcf;letter-spacing:-0.25px;transform:scaleX(1.1368);font-style:italic;font-family:'Liberation Serif',serif;-webkit-text-stroke:0.150px;">fx</span>
<svg style="left:400.2px;top:776.9000000000001px;" width="13" height="13" viewBox="0 0 13 13"><path d="M9.06 1.20L10.15 1.93L11.02 2.83L11.65 3.86L12.00 4.97L12.09 6.11L11.90 7.21L11.46 8.23L10.79 9.13L9.94 9.86L8.96 10.40L7.89 10.73L6.79 10.85L5.70 10.74L4.69 10.44L3.80 9.95L3.06 9.32L2.50 8.57L2.14 7.76L1.99 6.91L2.05 6.07L2.30 5.28L2.73 4.57L3.30 3.98L3.98 3.53L4.74 3.23L5.53 3.09L6.31 3.11L7.04 3.28L7.70 3.57L8.26 3.98L8.69 4.47L8.98 5.02L9.12 5.59L9.12 6.16L8.99 6.69L8.74 7.17L8.39 7.57L7.97 7.87L7.51 8.08L7.02 8.19L6.54 8.19L6.10 8.10L5.71 7.93L5.38 7.70L5.14 7.43L4.98 7.12L4.91 6.81L4.92 6.52" fill="none" stroke="#b4b4b4" stroke-width="1.150" stroke-linecap="round"/></svg>
<div style="left:418.2px;top:775.7px;width:89px;height:14.5px;background:#1f1f1f;"></div>
<span style="left:425px;top:773.4px;height:20px;line-height:20px;font-size:11.6px;color:#d6d6d6;letter-spacing:-0.25px;transform:scaleX(0.9826);">None</span>
<svg style="left:494.5px;top:779.7px;" width="9" height="7" viewBox="0 0 9 7"><path d="M1 1.4l3.5 3.6L8 1.4" fill="none" stroke="#c4c4c4" stroke-width="1.3"/></svg>
<svg style="left:90.5px;top:628.6500000000001px;" width="8" height="8" viewBox="0 0 8 8"><path d="M0.300 0.400h6.700L3.650 7.800z" fill="#c4c4c4"/></svg>
<span style="left:106px;top:623.5500000000001px;height:20px;line-height:20px;font-size:11.6px;color:#b2b2b2;letter-spacing:-0.25px;transform:scaleX(0.9634);">Effects</span>
<div style="left:6px;top:642.5px;width:13.2px;height:13.6px;background:#2b2b2b;"></div>
<span style="left:7.5px;top:639.1px;height:20px;line-height:20px;font-size:13px;color:#c8c8c8;letter-spacing:-0.25px;transform:scaleX(1.0940);font-style:italic;font-family:'Liberation Serif',serif;-webkit-text-stroke:0.150px;">fx</span>
<svg style="left:106.5px;top:645.4000000000001px;" width="8" height="8" viewBox="0 0 8 8"><path d="M0.300 0.400h6.700L3.650 7.800z" fill="#c4c4c4"/></svg>
<div style="left:120px;top:641.8000000000001px;width:141.5px;height:15.2px;background:#4a4a4a;"></div>
<span style="left:124px;top:640.3000000000001px;height:20px;line-height:20px;font-size:11.6px;color:#b2b2b2;letter-spacing:-0.25px;transform:scaleX(0.9233);">Lens Flare</span>
<span style="left:265px;top:639.9000000000001px;height:20px;line-height:20px;font-size:11.6px;color:#3094f0;letter-spacing:-0.25px;transform:scaleX(0.9045);">Reset</span>
<div style="left:379px;top:651.0px;width:10px;height:1.6px;background:#3094f0;"></div>
<svg style="left:8.5px;top:661.6500000000001px;" width="8" height="9" viewBox="0 0 8 9"><path d="M7 0.500L0.800 4.500 7 8.500z" fill="#444"/></svg>
<svg style="left:21.7px;top:660.95px;" width="11" height="11" viewBox="0 0 11 11"><path d="M5.300 0.900L9.700 5.300 5.300 9.700 0.900 5.300z" fill="#484848" stroke="#9a9a9a" stroke-width="1.100"/></svg>
<svg style="left:38.5px;top:661.6500000000001px;" width="8" height="9" viewBox="0 0 8 9"><path d="M0.800 0.500L7.200 4.500 0.800 8.500z" fill="#cfcfcf"/></svg>
<div style="left:136px;top:658.25px;width:15.5px;height:15.5px;background:#1c1c1c;"></div>
<svg style="left:137px;top:658.25px;" width="13" height="15" viewBox="0 0 13 15"><circle cx="6.5" cy="8.6" r="5" fill="none" stroke="#3094f0" stroke-width="1.3"/><path d="M4.3 1.6h4.4" stroke="#3094f0" stroke-width="1.6"/><path d="M6.5 2v2" stroke="#3094f0" stroke-width="1.3"/></svg>
<svg style="left:137px;top:658.25px;" width="13" height="15" viewBox="0 0 13 15"><path d="M6.500 8.600l2.600-2.800" stroke="#3094f0" stroke-width="1.300"/></svg>
<svg style="left:155.5px;top:659.6500000000001px;" width="13" height="12" viewBox="0 0 13 12"><path d="M1.200 0.500v10.300h11" fill="none" stroke="#c4c4c4" stroke-width="1.200"/><path d="M2.800 3.300l2.400 4.600 3-4.600 1.900 1.900" fill="none" stroke="#c4c4c4" stroke-width="1.100"/></svg>
<span style="left:175px;top:657.0500000000001px;height:20px;line-height:20px;font-size:11.6px;color:#b2b2b2;letter-spacing:-0.25px;transform:scaleX(0.9321);">Flare Center</span>
<span style="left:266px;top:656.6500000000001px;height:20px;line-height:20px;font-size:11.6px;color:#3094f0;letter-spacing:-0.25px;transform:scaleX(0.9447);">926.8,512.6</span>
<svg style="left:413.2px;top:659.5500000000002px;" width="13" height="13" viewBox="0 0 13 13"><path d="M9.06 1.20L10.15 1.93L11.02 2.83L11.65 3.86L12.00 4.97L12.09 6.11L11.90 7.21L11.46 8.23L10.79 9.13L9.94 9.86L8.96 10.40L7.89 10.73L6.79 10.85L5.70 10.74L4.69 10.44L3.80 9.95L3.06 9.32L2.50 8.57L2.14 7.76L1.99 6.91L2.05 6.07L2.30 5.28L2.73 4.57L3.30 3.98L3.98 3.53L4.74 3.23L5.53 3.09L6.31 3.11L7.04 3.28L7.70 3.57L8.26 3.98L8.69 4.47L8.98 5.02L9.12 5.59L9.12 6.16L8.99 6.69L8.74 7.17L8.39 7.57L7.97 7.87L7.51 8.08L7.02 8.19L6.54 8.19L6.10 8.10L5.71 7.93L5.38 7.70L5.14 7.43L4.98 7.12L4.91 6.81L4.92 6.52" fill="none" stroke="#ababab" stroke-width="1.150" stroke-linecap="round"/></svg>
<svg style="left:137px;top:675.2px;" width="13" height="15" viewBox="0 0 13 15"><circle cx="6.5" cy="8.6" r="5" fill="none" stroke="#c0c0c0" stroke-width="1.3"/><path d="M4.3 1.6h4.4" stroke="#c0c0c0" stroke-width="1.6"/><path d="M6.5 2v2" stroke="#c0c0c0" stroke-width="1.3"/></svg>
<div style="left:153px;top:675.3000000000001px;width:108.5px;height:15px;background:#4a4a4a;"></div>
<span style="left:156px;top:673.8000000000001px;height:20px;line-height:20px;font-size:11.6px;color:#b2b2b2;letter-spacing:-0.25px;transform:scaleX(0.9483);">Flare Brightness</span>
<span style="left:266px;top:673.4000000000001px;height:20px;line-height:20px;font-size:11.6px;color:#3094f0;letter-spacing:-0.25px;transform:scaleX(1.0847);">0</span>
<span style="left:272.5px;top:673.4000000000001px;height:20px;line-height:20px;font-size:11.6px;color:#b2b2b2;letter-spacing:-0.25px;transform:scaleX(1.0182);">%</span>
<svg style="left:413.2px;top:676.3000000000002px;" width="13" height="13" viewBox="0 0 13 13"><path d="M9.06 1.20L10.15 1.93L11.02 2.83L11.65 3.86L12.00 4.97L12.09 6.11L11.90 7.21L11.46 8.23L10.79 9.13L9.94 9.86L8.96 10.40L7.89 10.73L6.79 10.85L5.70 10.74L4.69 10.44L3.80 9.95L3.06 9.32L2.50 8.57L2.14 7.76L1.99 6.91L2.05 6.07L2.30 5.28L2.73 4.57L3.30 3.98L3.98 3.53L4.74 3.23L5.53 3.09L6.31 3.11L7.04 3.28L7.70 3.57L8.26 3.98L8.69 4.47L8.98 5.02L9.12 5.59L9.12 6.16L8.99 6.69L8.74 7.17L8.39 7.57L7.97 7.87L7.51 8.08L7.02 8.19L6.54 8.19L6.10 8.10L5.71 7.93L5.38 7.70L5.14 7.43L4.98 7.12L4.91 6.81L4.92 6.52" fill="none" stroke="#ababab" stroke-width="1.150" stroke-linecap="round"/></svg>
<svg style="left:137px;top:691.95px;" width="13" height="15" viewBox="0 0 13 15"><circle cx="6.5" cy="8.6" r="5" fill="none" stroke="#c0c0c0" stroke-width="1.3"/><path d="M4.3 1.6h4.4" stroke="#c0c0c0" stroke-width="1.6"/><path d="M6.5 2v2" stroke="#c0c0c0" stroke-width="1.3"/></svg>
<span style="left:156px;top:690.5500000000001px;height:20px;line-height:20px;font-size:11.6px;color:#b2b2b2;letter-spacing:-0.25px;transform:scaleX(0.9455);">Lens Type</span>
<div style="left:266px;top:692.25px;width:124.5px;height:14.5px;background:#1c1c1c;border:1px solid #2e2e2e;border-radius:2px;"></div>
<span style="left:272px;top:690.5500000000001px;height:20px;line-height:20px;font-size:11.6px;color:#d4d4d4;letter-spacing:-0.25px;transform:scaleX(1.0026);">50-300mm Zoom</span>
<svg style="left:377px;top:696.3500000000001px;" width="9" height="7" viewBox="0 0 9 7"><path d="M1 1.4l3.5 3.6L8 1.4" fill="none" stroke="#bdbdbd" stroke-width="1.3"/></svg>
<svg style="left:413.2px;top:693.0500000000002px;" width="13" height="13" viewBox="0 0 13 13"><path d="M9.06 1.20L10.15 1.93L11.02 2.83L11.65 3.86L12.00 4.97L12.09 6.11L11.90 7.21L11.46 8.23L10.79 9.13L9.94 9.86L8.96 10.40L7.89 10.73L6.79 10.85L5.70 10.74L4.69 10.44L3.80 9.95L3.06 9.32L2.50 8.57L2.14 7.76L1.99 6.91L2.05 6.07L2.30 5.28L2.73 4.57L3.30 3.98L3.98 3.53L4.74 3.23L5.53 3.09L6.31 3.11L7.04 3.28L7.70 3.57L8.26 3.98L8.69 4.47L8.98 5.02L9.12 5.59L9.12 6.16L8.99 6.69L8.74 7.17L8.39 7.57L7.97 7.87L7.51 8.08L7.02 8.19L6.54 8.19L6.10 8.10L5.71 7.93L5.38 7.70L5.14 7.43L4.98 7.12L4.91 6.81L4.92 6.52" fill="none" stroke="#ababab" stroke-width="1.150" stroke-linecap="round"/></svg>
<svg style="left:137px;top:708.7px;" width="13" height="15" viewBox="0 0 13 15"><circle cx="6.5" cy="8.6" r="5" fill="none" stroke="#c0c0c0" stroke-width="1.3"/><path d="M4.3 1.6h4.4" stroke="#c0c0c0" stroke-width="1.6"/><path d="M6.5 2v2" stroke="#c0c0c0" stroke-width="1.3"/></svg>
<span style="left:156px;top:707.3000000000001px;height:20px;line-height:20px;font-size:11.6px;color:#b2b2b2;letter-spacing:-0.25px;transform:scaleX(0.9870);">Blend With Original</span>
<span style="left:266px;top:706.9000000000001px;height:20px;line-height:20px;font-size:11.6px;color:#3094f0;letter-spacing:-0.25px;transform:scaleX(1.0847);">0</span>
<span style="left:272.5px;top:706.9000000000001px;height:20px;line-height:20px;font-size:11.6px;color:#b2b2b2;letter-spacing:-0.25px;transform:scaleX(1.0182);">%</span>
<svg style="left:413.2px;top:709.8000000000002px;" width="13" height="13" viewBox="0 0 13 13"><path d="M9.06 1.20L10.15 1.93L11.02 2.83L11.65 3.86L12.00 4.97L12.09 6.11L11.90 7.21L11.46 8.23L10.79 9.13L9.94 9.86L8.96 10.40L7.89 10.73L6.79 10.85L5.70 10.74L4.69 10.44L3.80 9.95L3.06 9.32L2.50 8.57L2.14 7.76L1.99 6.91L2.05 6.07L2.30 5.28L2.73 4.57L3.30 3.98L3.98 3.53L4.74 3.23L5.53 3.09L6.31 3.11L7.04 3.28L7.70 3.57L8.26 3.98L8.69 4.47L8.98 5.02L9.12 5.59L9.12 6.16L8.99 6.69L8.74 7.17L8.39 7.57L7.97 7.87L7.51 8.08L7.02 8.19L6.54 8.19L6.10 8.10L5.71 7.93L5.38 7.70L5.14 7.43L4.98 7.12L4.91 6.81L4.92 6.52" fill="none" stroke="#ababab" stroke-width="1.150" stroke-linecap="round"/></svg>
<svg style="left:123px;top:729.45px;" width="8" height="8" viewBox="0 0 8 8"><path d="M0.400 0.300L7.400 3.700 0.400 7.100z" fill="#c4c4c4"/></svg>
<span style="left:140px;top:724.0500000000001px;height:20px;line-height:20px;font-size:11.6px;color:#b2b2b2;letter-spacing:-0.25px;transform:scaleX(0.9842);">Compositing Options</span>
<svg style="left:267px;top:727.6500000000001px;" width="11" height="11" viewBox="0 0 11 11"><path d="M5.500 0.500v10M0.500 5.500h10" stroke="#dadada" stroke-width="1.700"/></svg>
<svg style="left:281px;top:727.6500000000001px;" width="11" height="11" viewBox="0 0 11 11"><path d="M0.500 5.500h10" stroke="#dadada" stroke-width="1.700"/></svg>
<svg style="left:91px;top:746.2px;" width="8" height="8" viewBox="0 0 8 8"><path d="M0.400 0.300L7.400 3.700 0.400 7.100z" fill="#c4c4c4"/></svg>
<span style="left:106px;top:740.8000000000001px;height:20px;line-height:20px;font-size:11.6px;color:#b2b2b2;letter-spacing:-0.25px;transform:scaleX(0.9820);">Transform</span>
<span style="left:265px;top:740.4000000000001px;height:20px;line-height:20px;font-size:11.6px;color:#3094f0;letter-spacing:-0.25px;transform:scaleX(0.9045);">Reset</span>
<div style="left:2.5px;top:798px;width:630px;height:1.7px;background:#161616;"></div>
<div style="left:2px;top:799.9px;width:631px;height:15.1px;background:#262626;"></div>
<div style="left:6px;top:801px;width:14px;height:14px;background:#2e2e2e;"></div>
<svg style="left:8px;top:802.5px;" width="12" height="12" viewBox="0 0 12 12"><rect x="0.700" y="0.700" width="7.500" height="7.500" rx="1" fill="none" stroke="#3094f0" stroke-width="1.200"/><rect x="3.700" y="3.700" width="7.500" height="7.500" rx="1" fill="#2b2b2b" stroke="#3094f0" stroke-width="1.200"/><path d="M7.500 5.500v4M5.500 7.500h4" stroke="#3094f0" stroke-width="1"/></svg>
<svg style="left:26px;top:802px;" width="12" height="12" viewBox="0 0 12 12"><circle cx="4.700" cy="4.700" r="4" fill="none" stroke="#c4c4c4" stroke-width="1.200"/><rect x="5" y="5" width="6.300" height="6.300" fill="#262626" stroke="#c4c4c4" stroke-width="1.200"/><path d="M5.600 5.600h3.500L5.600 9.100z" fill="#c4c4c4"/></svg>
<svg style="left:43px;top:802px;" width="13" height="12" viewBox="0 0 13 12"><path d="M4 0.800C2.500 0.800 2.500 2 2.500 3.500S2 5.700 0.800 6C2 6.300 2.500 7 2.500 8.500S2.500 11.200 4 11.200M9 0.800c1.500 0 1.500 1.200 1.500 2.700S11 5.700 12.200 6C11 6.300 10.500 7 10.500 8.500S10.500 11.200 9 11.200" fill="none" stroke="#c4c4c4" stroke-width="1.300"/><rect x="4.200" y="1.500" width="4.600" height="9" fill="#8a8a8a"/></svg>
<div style="left:263px;top:800.7px;width:131.7px;height:15px;background:#1f1f1f;border:1px solid #303030;border-radius:3px;"></div>
<span style="left:269.5px;top:798px;height:20px;line-height:20px;font-size:11.6px;color:#b8b8b8;letter-spacing:-0.25px;transform:scaleX(0.9695);">Toggle Switches / Modes</span>
<div style="left:526.3px;top:558px;width:1.7px;height:241px;background:#161616;"></div>
<div style="left:527.6px;top:558.3px;width:672px;height:1.5px;background:#161616;"></div>
<div style="left:527.6px;top:559.8px;width:672px;height:7.7px;background:#5e5e5e;"></div>
<div style="left:527.6px;top:559.8px;width:7px;height:7.7px;background:#3094f0;border-radius:4px 0 0 4px;"></div>
<div style="left:535.3px;top:559.8px;width:1px;height:7.7px;background:#8a8a8a;"></div>
<div style="left:527.6px;top:567.5px;width:672px;height:20.7px;background:#262626;"></div>
<div style="left:527.6px;top:588.2px;width:672px;height:0.8px;background:#161616;"></div>
<div style="left:527.6px;top:589px;width:672px;height:14.3px;background:#5e5e5e;"></div>
<div style="left:528.1px;top:589px;width:4.7px;height:14px;background:#3094f0;border-radius:3px 0 0 3px;"></div>
<div style="left:527.6px;top:603.3px;width:672px;height:4.3px;background:#161616;"></div>
<span style="left:533.0px;top:565.7px;height:20px;line-height:20px;font-size:11.5px;color:#7c7c7c;letter-spacing:-0.25px;transform:scaleX(0.8533);">00s</span>
<div style="left:620.0px;top:582.8px;width:1px;height:4.5px;background:#8a8a8a;"></div>
<span style="left:612.8px;top:565.7px;height:20px;line-height:20px;font-size:11.5px;color:#a0a0a0;letter-spacing:-0.25px;transform:scaleX(0.7924);">02s</span>
<div style="left:706.0px;top:582.8px;width:1px;height:4.5px;background:#8a8a8a;"></div>
<span style="left:698.8px;top:565.7px;height:20px;line-height:20px;font-size:11.5px;color:#a0a0a0;letter-spacing:-0.25px;transform:scaleX(0.7924);">04s</span>
<div style="left:792.0px;top:582.8px;width:1px;height:4.5px;background:#8a8a8a;"></div>
<span style="left:784.8px;top:565.7px;height:20px;line-height:20px;font-size:11.5px;color:#a0a0a0;letter-spacing:-0.25px;transform:scaleX(0.7924);">06s</span>
<div style="left:878.0px;top:582.8px;width:1px;height:4.5px;background:#8a8a8a;"></div>
<span style="left:870.8px;top:565.7px;height:20px;line-height:20px;font-size:11.5px;color:#a0a0a0;letter-spacing:-0.25px;transform:scaleX(0.7924);">08s</span>
<div style="left:964.0px;top:582.8px;width:1px;height:4.5px;background:#8a8a8a;"></div>
<span style="left:956.8px;top:565.7px;height:20px;line-height:20px;font-size:11.5px;color:#a0a0a0;letter-spacing:-0.25px;transform:scaleX(0.7924);">10s</span>
<div style="left:1050.0px;top:582.8px;width:1px;height:4.5px;background:#8a8a8a;"></div>
<span style="left:1042.8px;top:565.7px;height:20px;line-height:20px;font-size:11.5px;color:#a0a0a0;letter-spacing:-0.25px;transform:scaleX(0.7924);">12s</span>
<div style="left:1136.0px;top:582.8px;width:1px;height:4.5px;background:#8a8a8a;"></div>
<span style="left:1128.8px;top:565.7px;height:20px;line-height:20px;font-size:11.5px;color:#a0a0a0;letter-spacing:-0.25px;transform:scaleX(0.7924);">14s</span>
<div style="left:527.6px;top:607.6px;width:672px;height:190.4px;background:#323232;"></div>
<div style="left:527.6px;top:606.9000000000001px;width:672px;height:1.1px;background:#272727;"></div>
<div style="left:527.6px;top:623.6500000000001px;width:672px;height:1.1px;background:#272727;"></div>
<div style="left:527.6px;top:640.4000000000001px;width:672px;height:1.1px;background:#272727;"></div>
<div style="left:527.6px;top:657.1500000000001px;width:672px;height:1.1px;background:#272727;"></div>
<div style="left:527.6px;top:673.9000000000001px;width:672px;height:1.1px;background:#272727;"></div>
<div style="left:527.6px;top:690.6500000000001px;width:672px;height:1.1px;background:#272727;"></div>
<div style="left:527.6px;top:707.4000000000001px;width:672px;height:1.1px;background:#272727;"></div>
<div style="left:527.6px;top:724.1500000000001px;width:672px;height:1.1px;background:#272727;"></div>
<div style="left:527.6px;top:740.9000000000001px;width:672px;height:1.1px;background:#272727;"></div>
<div style="left:527.6px;top:757.6500000000001px;width:672px;height:1.1px;background:#272727;"></div>
<div style="left:527.6px;top:774.4000000000001px;width:672px;height:1.1px;background:#272727;"></div>
<div style="left:527.6px;top:791.1500000000001px;width:672px;height:1.1px;background:#272727;"></div>
<div style="left:527.6px;top:607.6px;width:6.5px;height:190.4px;background:#2b2b2b;"></div>
<div style="left:527.6px;top:608.2px;width:7.5px;height:15.6px;background:#474747;"></div>
<div style="left:535.500px;top:608.1px;width:664.500px;height:15.800px;background:linear-gradient(#8c8ab6,#9f9dc8 40%,#9b99c4 65%,#8a88b4);"></div>
<svg style="left:535.500px;top:608.1px;opacity:0.160" width="664.500" height="15.800"><filter id="grain" x="0" y="0" width="100%" height="100%"><feTurbulence type="fractalNoise" baseFrequency="0.900" numOctaves="2" seed="7"/><feColorMatrix type="saturate" values="0"/></filter><rect width="664.500" height="15.800" filter="url(#grain)"/></svg>
<div style="left:535.5px;top:759.25px;width:664.5px;height:14.8px;background:#535f93;"></div>
<div style="left:535.5px;top:776.0px;width:664.5px;height:14.8px;background:#535f93;"></div>
<svg style="left:616px;top:661.7500000000001px;" width="10" height="10" viewBox="0 0 10 10"><path d="M5 0.300L0.300 5 5 9.700z" fill="#c8c8c8"/><path d="M5 0.300L9.700 5 5 9.700z" fill="#8e8e8e"/></svg>
<svg style="left:916px;top:661.7500000000001px;" width="10" height="10" viewBox="0 0 10 10"><path d="M5 0.300L0.300 5 5 9.700z" fill="#c8c8c8"/><path d="M5 0.300L9.700 5 5 9.700z" fill="#8e8e8e"/></svg>
<svg style="left:531px;top:627.45px;" width="9" height="12" viewBox="0 0 9 12"><path d="M4 0.600v10.800" stroke="#bcbab6" stroke-width="3.200"/><path d="M0.300 0.800h7.400M0.300 11.200h7.400" stroke="#bcbab6" stroke-width="1.500" fill="none"/></svg>
<svg style="left:531px;top:644.2px;" width="9" height="12" viewBox="0 0 9 12"><path d="M4 0.600v10.800" stroke="#bcbab6" stroke-width="3.200"/><path d="M0.300 0.800h7.400M0.300 11.200h7.400" stroke="#bcbab6" stroke-width="1.500" fill="none"/></svg>
<svg style="left:531px;top:694.45px;" width="9" height="12" viewBox="0 0 9 12"><path d="M4 0.600v10.800" stroke="#bcbab6" stroke-width="3.200"/><path d="M0.300 0.800h7.400M0.300 11.200h7.400" stroke="#bcbab6" stroke-width="1.500" fill="none"/></svg>
<svg style="left:531px;top:711.2px;" width="9" height="12" viewBox="0 0 9 12"><path d="M4 0.600v10.800" stroke="#bcbab6" stroke-width="3.200"/><path d="M0.300 0.800h7.400M0.300 11.200h7.400" stroke="#bcbab6" stroke-width="1.500" fill="none"/></svg>
<svg style="left:531px;top:727.95px;" width="9" height="12" viewBox="0 0 9 12"><path d="M4 0.600v10.800" stroke="#bcbab6" stroke-width="3.200"/><path d="M0.300 0.800h7.400M0.300 11.200h7.400" stroke="#bcbab6" stroke-width="1.500" fill="none"/></svg>
<svg style="left:531px;top:744.7px;" width="9" height="12" viewBox="0 0 9 12"><path d="M4 0.600v10.800" stroke="#bcbab6" stroke-width="3.200"/><path d="M0.300 0.800h7.400M0.300 11.200h7.400" stroke="#bcbab6" stroke-width="1.500" fill="none"/></svg>
<svg style="left:531px;top:677.7px;" width="9" height="12" viewBox="0 0 9 12"><path d="M4 0.600v10.800" stroke="#2f92f0" stroke-width="3.200"/><path d="M0.300 0.800h7.400M0.300 11.200h7.400" stroke="#2f92f0" stroke-width="1.500" fill="none"/></svg>
<div style="left:534px;top:580px;width:1.9px;height:218.5px;background:#2f86dd;"></div>
<svg style="left:528.3px;top:572.7px;" width="13" height="15" viewBox="0 0 13 15"><path d="M0.500 0.500h12v7.500L6.500 14.500 0.500 8z" fill="#3094f0"/><path d="M6.500 6v8" stroke="#9cc4ee" stroke-width="0.800"/></svg>
<svg style="left:532.5px;top:804px;" width="11" height="6" viewBox="0 0 11 6"><path d="M0 6L3 2.500 4.500 4 6.500 1 10.500 6z" fill="#c4c4c4"/></svg>
<div style="left:562px;top:808px;width:39px;height:1.3px;background:#4a4a4a;"></div>
<svg style="left:552.5px;top:802.5px;" width="12" height="12" viewBox="0 0 12 12"><circle cx="6" cy="6" r="4.300" fill="#262626" stroke="#b4b4b4" stroke-width="1.500"/></svg>
<svg style="left:611.5px;top:802px;" width="18" height="8" viewBox="0 0 18 8"><path d="M0 8L3.500 3 5 5 9 0 16.500 8z" fill="#c4c4c4"/><path d="M3.300 8L6 4.300" stroke="#262626" stroke-width="0.900"/></svg>
<div style="left:633px;top:798px;width:567px;height:17px;background:#212121;"></div>
<svg style="left:287.2px;top:681.2px;" width="12" height="18" viewBox="0 0 12 18"><path d="M1 1v13.500l3.200-3 2.300 5.300 2.200-1-2.300-5.200H10.800z" fill="#0a0a0a" stroke="#f0f0f0" stroke-width="1.100" stroke-linejoin="round"/></svg>
</div></body></html>
